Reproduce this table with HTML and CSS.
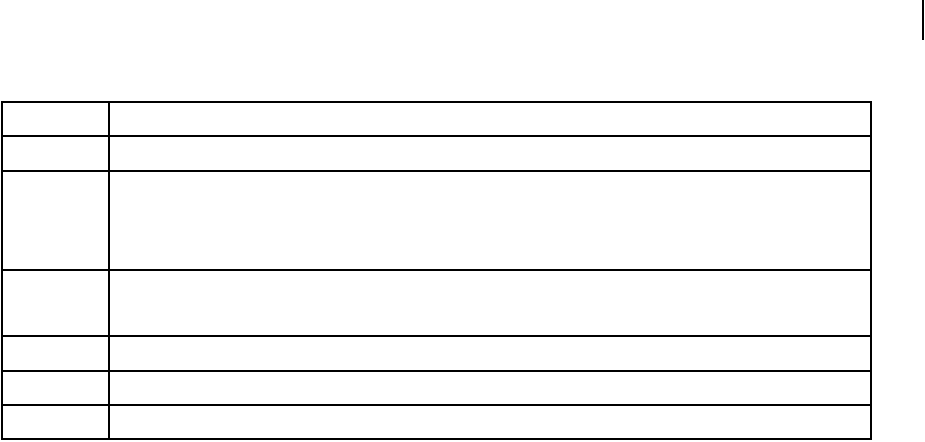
FILE: index.html
```html
<!DOCTYPE html>
<html>
<head>
<meta charset="utf-8">
<link rel="stylesheet" href="styles.css">
</head>
<body>
<div class="page">
  <div class="top"><span class="caret"></span></div>
  <table class="grid">
    <tr class="r34"><td class="c1"></td><td></td></tr>
    <tr class="r35"><td class="c1"></td><td></td></tr>
    <tr class="r99"><td class="c1"></td><td></td></tr>
    <tr class="r66"><td class="c1"></td><td></td></tr>
    <tr class="r35"><td class="c1"></td><td></td></tr>
    <tr class="r34"><td class="c1"></td><td></td></tr>
    <tr class="r34"><td class="c1"></td><td></td></tr>
  </table>
</div>
</body>
</html>
```
FILE: styles.css
```css
html, body {
  margin: 0;
  padding: 0;
  background: #fff;
  font-family: "Liberation Sans", Arial, sans-serif;
}
.page {
  position: relative;
  width: 925px;
  height: 442px;
  overflow: hidden;
}
.top {
  height: 101px;
}
.caret {
  position: absolute;
  left: 922px;
  top: 0;
  width: 2px;
  height: 40px;
  background: #000;
}
.grid {
  margin-left: 1px;
  width: 871px;
  border-collapse: collapse;
  table-layout: fixed;
}
.grid td {
  border: 2px solid #000;
  padding: 0;
}
.grid .c1 {
  width: 105px;
}
.r34 { height: 34px; }
.r35 { height: 35px; }
.r99 { height: 99px; }
.r66 { height: 66px; }
```
